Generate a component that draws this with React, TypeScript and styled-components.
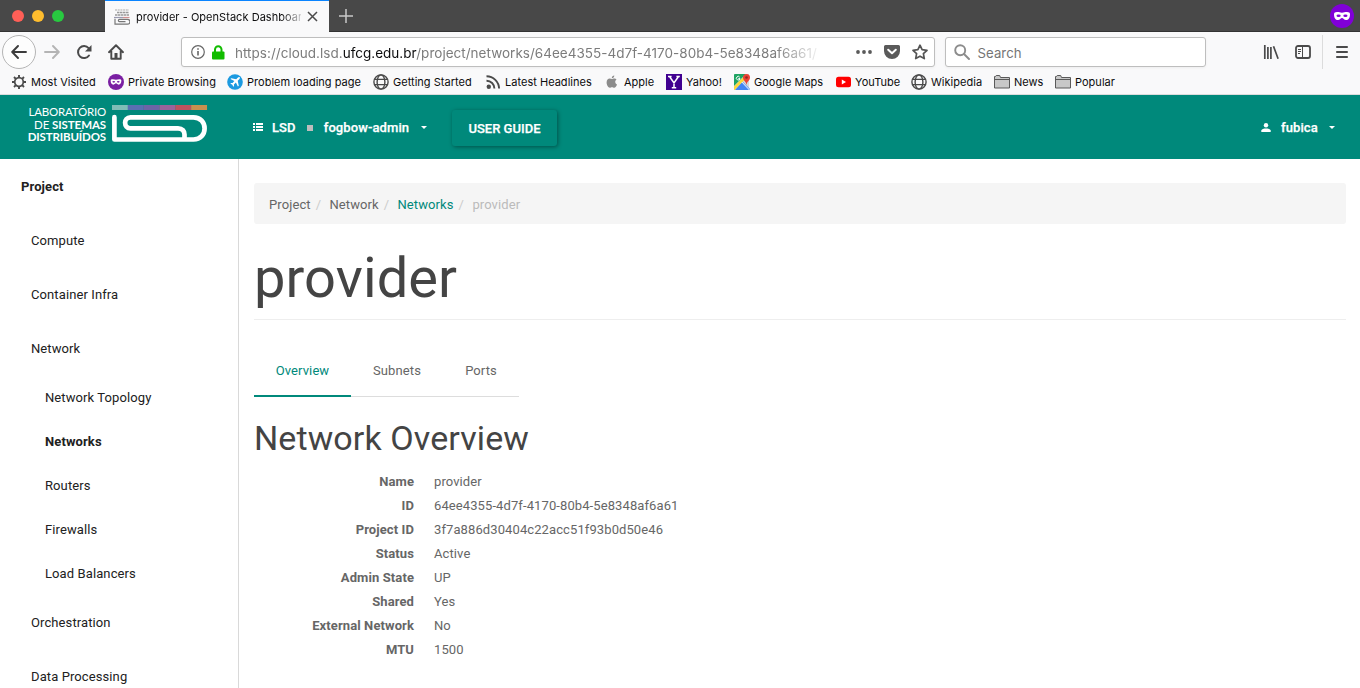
import React from 'react';
import styled, { createGlobalStyle, css } from 'styled-components';

const teal = '#00897b';
const chromeInk = '#4a4a4a';

const GlobalStyle = createGlobalStyle`
  * { box-sizing: border-box; }
  html, body { margin: 0; padding: 0; overflow: hidden; background: #fff; }
  body { font-family: Roboto, sans-serif; font-size: 13px; line-height: 24px; letter-spacing: 0.1px; color: #666; }
  svg { display: block; flex: none; }
`;

const Page = styled.div`
  width: 1360px;
  height: 688px;
  display: flex;
  flex-direction: column;
  overflow: hidden;
`;

/* ---------- browser window ---------- */

const TabStrip = styled.div`
  height: 32px;
  flex: none;
  display: flex;
  align-items: stretch;
  background: #484848;
  box-shadow: inset 0 -1px 0 #333;
  font-family: Inter, sans-serif;
`;

const TrafficLights = styled.div`
  width: 105px;
  display: flex;
  align-items: center;
  gap: 8px;
  padding-left: 12px;
`;

const Light = styled.span<{ $color: string }>`
  width: 12px;
  height: 12px;
  border-radius: 50%;
  background: ${(p) => p.$color};
`;

const BrowserTab = styled.div`
  width: 224px;
  display: flex;
  align-items: center;
  padding: 0 11px 0 9px;
  border-top: 1px solid #0a84ff;
  background: #f9f9fa;
`;

const TabTitle = styled.span`
  width: 165px;
  margin-left: 6px;
  margin-right: 6px;
  white-space: nowrap;
  font-size: 11px;
  letter-spacing: 0.04px;
  color: #0c0c0d;
  mask-image: linear-gradient(to right, #000 145px, transparent 170px);
`;

const NewTab = styled.div`
  display: flex;
  align-items: center;
  padding-left: 10px;
`;

const PrivateBadge = styled.div`
  display: flex;
  align-items: center;
  margin-left: auto;
  padding-right: 6px;
`;

const Toolbar = styled.div`
  height: 40px;
  flex: none;
  display: flex;
  align-items: center;
  background: #f9f9fa;
  font-family: Inter, sans-serif;
`;

const NavButtons = styled.div`
  width: 181px;
  display: flex;
  align-items: center;
  padding-left: 2px;
`;

const BackButton = styled.span`
  width: 34px;
  height: 34px;
  margin-right: 8px;
  display: flex;
  align-items: center;
  justify-content: center;
  border: 1px solid #b5b5b5;
  border-radius: 50%;
  background: #fdfdfd;
`;

const NavIcon = styled.span`
  width: 32px;
  display: flex;
`;

const fieldBox = css`
  height: 30px;
  display: flex;
  align-items: center;
  border: 1px solid #bebebe;
  border-radius: 3px;
  background: #fff;
  box-shadow: 0 1px 3px rgba(0, 0, 0, 0.05);
`;

const UrlBar = styled.div`
  ${fieldBox}
  width: 754px;
  padding: 0 6px 0 9px;
`;

const LockIcon = styled.svg`
  margin-left: 7px;
`;

const Url = styled.span`
  width: 590px;
  margin-left: 10px;
  margin-right: auto;
  padding-top: 2px;
  white-space: nowrap;
  font-size: 13.5px;
  letter-spacing: 0.02px;
  color: #7c7c7c;
  mask-image: linear-gradient(to right, #000 540px, transparent 588px);
`;

const UrlHost = styled.span`
  color: #0c0c0d;
`;

const UrlActions = styled.span`
  display: flex;
  align-items: center;
  gap: 12px;
`;

const SearchBox = styled.div`
  ${fieldBox}
  width: 261px;
  margin-left: 10px;
  padding-left: 8px;
  gap: 7.5px;
  font-size: 13.2px;
  letter-spacing: 0.05px;
  color: #757575;
`;

const SearchHint = styled.span`
  padding-top: 2px;
`;

const ToolIcons = styled.div`
  margin-left: auto;
  display: flex;
  align-items: center;
  gap: 16px;
`;

const MenuButton = styled.div`
  width: 38px;
  height: 34px;
  margin-left: -5px;
  padding-left: 13px;
  display: flex;
  align-items: center;
  border-left: 1px solid #dcdcdc;
`;

const Bookmarks = styled.div`
  height: 23px;
  flex: none;
  display: flex;
  padding: 0 0 2px 11px;
  background: #f9f9fa;
  border-bottom: 1px solid #dcdcdc;
  font-family: Inter, sans-serif;
  font-size: 11px;
  color: #0c0c0d;
`;

const Bookmark = styled.span<{ $width: number; $gap?: number }>`
  width: ${(p) => p.$width}px;
  display: flex;
  align-items: center;
  gap: ${(p) => p.$gap ?? 4}px;
  white-space: nowrap;
  letter-spacing: 0.02px;
`;

/* ---------- dashboard header ---------- */

const Header = styled.header`
  height: 64px;
  flex: none;
  display: flex;
  align-items: center;
  padding: 0 21px 0 28px;
  background: ${teal};
  color: #fff;
`;

const Logo = styled.div`
  width: 225px;
  height: 64px;
  display: flex;
  padding-top: 10px;
`;

const LogoText = styled.div`
  width: 78px;
  margin-right: 6px;
  padding-top: 1px;
  display: flex;
  flex-direction: column;
  align-items: flex-end;
  font-family: Lato, sans-serif;
  font-size: 11.5px;
  line-height: 12.5px;
  white-space: nowrap;
`;

const LogoLine = styled.div<{ $track?: number }>`
  letter-spacing: ${(p) => p.$track ?? 0}px;
`;

const HeaderText = styled.span<{ $before?: number }>`
  margin-left: ${(p) => p.$before ?? 0}px;
  padding-top: 1px;
  font-weight: 500;
  font-size: 13px;
  -webkit-text-stroke: 0.25px #fff;
`;

const Caret = styled.span<{ $before?: number }>`
  width: 0;
  height: 0;
  margin-left: ${(p) => p.$before ?? 11.5}px;
  border: 3px solid transparent;
  border-top-color: #fff;
  border-bottom: 0;
`;

const ProjectMenu = styled.div`
  width: 199px;
  display: flex;
  align-items: center;
`;

const Square = styled.span`
  width: 6px;
  height: 6px;
  margin: 2px 11px 0 11px;
  background: #bdbdbd;
`;

const GuideButton = styled.button`
  width: 105px;
  height: 36px;
  margin-top: 1px;
  padding: 1px 0 0;
  border: 0;
  border-radius: 3px;
  background: ${teal};
  box-shadow: 1px 1px 4px rgba(0, 0, 0, 0.4);
  color: #fff;
  font: 500 13px Roboto, sans-serif;
  letter-spacing: 0;
  -webkit-text-stroke: 0.25px #fff;
`;

const UserMenu = styled.div`
  margin-left: auto;
  width: 78px;
  display: flex;
  align-items: center;
`;

/* ---------- dashboard body ---------- */

const Body = styled.div`
  flex: 1;
  min-height: 0;
  display: flex;
`;

const Sidebar = styled.nav`
  width: 239px;
  flex: none;
  overflow: hidden;
  border-right: 1px solid #d9d9d9;
  color: #212121;
`;

const SideItem = styled.div<{ $level: number; $active?: boolean }>`
  height: ${(p) => (p.$level === 2 ? 44 : 54)}px;
  padding-top: 2px;
  padding-left: ${(p) => [21, 31, 45][p.$level]}px;
  display: flex;
  align-items: center;
  font-weight: ${(p) => (p.$active ? 700 : 400)};
`;

const Main = styled.main`
  flex: 1;
  padding: 24px 14px 0 15px;
`;

const Breadcrumb = styled.div`
  height: 41px;
  display: flex;
  align-items: center;
  padding: 2px 15px 0;
  border-radius: 3px;
  background: #f5f5f5;
`;

const Crumb = styled.span<{ $color?: string }>`
  color: ${(p) => p.$color ?? '#666'};
`;

const Slash = styled.span`
  padding: 0 8.3px 0 5px;
  color: #ccc;
`;

const Title = styled.h1`
  height: 96px;
  margin: 0;
  padding-top: 23px;
  border-bottom: 1px solid #eee;
  font-size: 56px;
  line-height: 62px;
  font-weight: 400;
  letter-spacing: 0.1px;
  color: #444;
`;

const Tabs = styled.div`
  width: max-content;
  height: 53px;
  margin-top: 24px;
  display: flex;
  box-shadow: inset 0 -1px 0 #ddd;
`;

const Tab = styled.div<{ $active?: boolean; $width: number }>`
  width: ${(p) => p.$width}px;
  display: flex;
  justify-content: center;
  padding-top: 15px;
  color: ${(p) => (p.$active ? teal : '#666')};
  box-shadow: ${(p) => (p.$active ? `inset 0 -2px 0 ${teal}` : 'none')};
`;

const SectionTitle = styled.h3`
  margin: 22px 0 13px;
  height: 38px;
  font-size: 34px;
  line-height: 38px;
  font-weight: 400;
  letter-spacing: 0.1px;
  color: #444;
`;

const Details = styled.dl`
  margin: 0;
  display: grid;
  grid-template-columns: 160px 1fr;
  column-gap: 20px;
  grid-auto-rows: 24px;
`;

const Term = styled.dt`
  text-align: right;
  font-weight: 700;
`;

const Value = styled.dd`
  margin: 0;
`;

/* ---------- icons ---------- */

const Mask = ({ size, color }: { size: number; color: string }) => (
  <svg width={size} height={size} viewBox="0 0 24 24">
    <circle cx="12" cy="12" r="12" fill={color} />
    <path
      d="M4 10.2C4 8.7 5.2 8 7 8c2 0 3.400.7 5 .7S15 8 17 8s3 .7 3 2.200c0 3.600-1.500 5.800-4 5.800-1.900 0-2.700-2-4-2s-2.100 2-4 2c-2.500 0-4-2.200-4-5.800z"
      fill="#fff"
    />
    <ellipse cx="8.600" cy="11.800" rx="2.100" ry="1.200" fill={color} />
    <ellipse cx="15.400" cy="11.800" rx="2.100" ry="1.200" fill={color} />
  </svg>
);

const Globe = () => (
  <svg width="16" height="16" viewBox="0 0 16 16" fill="none" stroke={chromeInk} strokeWidth="1.400">
    <circle cx="8" cy="8" r="7.100" />
    <ellipse cx="8" cy="8" rx="3.900" ry="7.100" />
    <path d="M1.500 5.300h13M1.500 10.700h13" strokeWidth="1.300" />
  </svg>
);

const Gear = () => (
  <svg width="16" height="16" viewBox="0 0 16 16" fill="none" stroke={chromeInk}>
    <circle cx="8" cy="8" r="4.300" strokeWidth="1.700" />
    <path
      d="M8 3.500V1M8 12.500V15M3.500 8H1M12.500 8H15M4.800 4.800L3 3M11.200 11.200L13 13M4.800 11.200L3 13M11.200 4.800L13 3"
      strokeWidth="1.900"
    />
  </svg>
);

const Plane = () => (
  <svg width="16" height="16" viewBox="0 0 16 16">
    <circle cx="8" cy="8" r="7.800" fill="#1c9ae0" />
    <path
      d="M12.700 3.300c-.6-.5-1.400-.1-2 .5L9.200 5.300 4.300 4.200l-.9.900L7.400 7.100 5.600 9.100l-1.600-.2-.7.700 2 1.100 1.100 2 .7-.7-.2-1.600 2-1.800 2 4 .9-.9-1.100-4.900 1.500-1.500c.6-.6 1-1.400.5-2z"
      fill="#fff"
    />
  </svg>
);

const Rss = () => (
  <svg width="15" height="16" viewBox="0 0 15 16" fill="none" stroke={chromeInk} strokeWidth="1.900">
    <circle cx="2.800" cy="12.700" r="2.200" fill={chromeInk} stroke="none" />
    <path d="M.5 6.700a7.800 7.800 0 0 1 7.900 7.900M.5 2.300a12.600 12.600 0 0 1 12.600 12.300" />
  </svg>
);

const Apple = () => (
  <svg width="14" height="16" viewBox="0 0 14 16" fill="#8b8b8b">
    <path d="M9.300 1.500c.1 1.500-1.100 2.700-2.500 2.700C6.700 2.800 7.900 1.600 9.300 1.500zM6.900 5c.6 0 1.300-.6 2.400-.6.900 0 1.800.5 2.300 1.200-2 1.200-1.700 4 .4 4.800-.5 1.500-1.700 3.300-2.800 3.300-.9 0-1.200-.5-2.200-.5s-1.400.5-2.200.5C3.200 13.700 1.600 10.900 1.600 8.500c0-2.500 1.500-4 3.100-4 1 0 1.700.5 2.200.5z" />
  </svg>
);

const Yahoo = () => (
  <svg width="16" height="16" viewBox="0 0 16 16">
    <path d="M0 0h16v16H0z" fill="#400090" />
    <path d="M3.500 2.500L8 9l4.500-6.500M8 8.500V14M2 2.500h3.600M10.400 2.500h3.400M5.800 13.700h4.400" fill="none" stroke="#fff" strokeWidth="1.500" />
  </svg>
);

const Maps = () => (
  <svg width="16" height="16" viewBox="0 0 16 16">
    <path d="M0 1a1 1 0 0 1 1-1h14v16H1a1 1 0 0 1-1-1z" fill="#d8d8d8" />
    <path d="M0 1a1 1 0 0 1 1-1h11L0 12z" fill="#1fa463" />
    <path d="M8.500 7.500L16 15v1H1z" fill="#4285f4" />
    <path d="M0 12.500L10 2.500l1.800 2L.5 16H0z" fill="#fdd835" />
    <path d="M7.800 8L15.500 16" stroke="#fff" strokeWidth="1" />
    <path d="M12.500 0A3.500 3.500 0 0 1 16 3.500C16 6.500 13 7 12.500 11 12 7 9 6.500 9 3.500A3.500 3.500 0 0 1 12.500 0z" fill="#ea4335" />
    <circle cx="12.500" cy="3.500" r="1.300" fill="#8f2a22" />
    <path d="M5.700 3.200A1.800 1.800 0 1 0 6 4.600H4.300" fill="none" stroke="#fff" />
  </svg>
);

const YouTube = () => (
  <svg width="15" height="16" viewBox="0 0 15 16">
    <rect x="0" y="2.700" width="15" height="10.600" rx="2.500" fill="#f00" />
    <path d="M5.800 5.600v4.800L10 8z" fill="#fff" />
  </svg>
);

const Folder = () => (
  <svg width="16" height="16" viewBox="0 0 16 16" fill="#c8c8c8" stroke="#5a5a5a">
    <path d="M.5 14V2.500h1l.7-1h3.500l.8 2h9V14z" />
    <path d="M.5 5.500h15" />
  </svg>
);

const Favicon = () => (
  <svg width="16" height="16" viewBox="0 0 16 16" fill="none">
    <path d="M1 1h14" stroke="#c4c4c4" strokeWidth="1.300" strokeDasharray="2 .7" />
    <path d="M3 3.500h12M1 6h14" stroke="#999" strokeWidth="1.600" strokeDasharray="2.500 .5" />
    <path d="M0 8.500h9" stroke="#9a9ab0" strokeWidth="1.200" />
    <path d="M9 8.500h6.500" stroke="#cf8f8f" strokeWidth="1.200" />
    <path d="M1 9.800v5.400h12.500a2.400 2.400 0 0 0 0-4.900H5.500c-1.500 0-1.500 2.300 0 2.300h6" stroke="#777" strokeWidth="1.200" />
  </svg>
);

const LogoMark = () => (
  <svg width="96" height="38" viewBox="0 0 96 38" fill="none">
    {['#80bdb7', '#5a6fb2', '#6d64a6', '#9b639b', '#bd525f', '#c8904f'].map((c, i) => (
      <rect key={c} x={i * 15.83} y="0" width="15.900" height="5" fill={c} />
    ))}
    <path
      d="M2.400 12.200V34.500H81.500C88.500 34.500 92.600 29.200 92.600 23.400S88.500 12.300 81.500 12.300H18.500C11.300 12.300 11.300 23.300 18.500 23.300H66C70.500 23.300 72.500 26 72.500 29.500V33"
      stroke="#fff"
      strokeWidth="4.700"
      strokeLinecap="round"
      strokeLinejoin="round"
    />
  </svg>
);

const bookmarks = [
  { label: 'Most Visited', width: 97, icon: <Gear /> },
  { label: 'Private Browsing', width: 119, icon: <Mask size={16} color="#7a1fa2" /> },
  { label: 'Problem loading page', width: 146, icon: <Plane /> },
  { label: 'Getting Started', width: 113, icon: <Globe /> },
  { label: 'Latest Headlines', width: 119, icon: <Rss /> },
  { label: 'Apple', width: 61, gap: 5, icon: <Apple /> },
  { label: 'Yahoo!', width: 68, icon: <Yahoo /> },
  { label: 'Google Maps', width: 102, icon: <Maps /> },
  { label: 'YouTube', width: 75, icon: <YouTube /> },
  { label: 'Wikipedia', width: 83, icon: <Globe /> },
  { label: 'News', width: 61, icon: <Folder /> },
  { label: 'Popular', width: 80, icon: <Folder /> },
];

const sideItems = [
  { label: 'Project', level: 0, active: true },
  { label: 'Compute', level: 1 },
  { label: 'Container Infra', level: 1 },
  { label: 'Network', level: 1 },
  { label: 'Network Topology', level: 2 },
  { label: 'Networks', level: 2, active: true },
  { label: 'Routers', level: 2 },
  { label: 'Firewalls', level: 2 },
  { label: 'Load Balancers', level: 2 },
  { label: 'Orchestration', level: 1 },
  { label: 'Data Processing', level: 1 },
];

const crumbs = [
  { label: 'Project' },
  { label: 'Network' },
  { label: 'Networks', color: teal },
  { label: 'provider', color: '#bbb' },
];

const details = [
  ['Name', 'provider'],
  ['ID', '64ee4355-4d7f-4170-80b4-5e8348af6a61'],
  ['Project ID', '3f7a886d30404c22acc51f93b0d50e46'],
  ['Status', 'Active'],
  ['Admin State', 'UP'],
  ['Shared', 'Yes'],
  ['External Network', 'No'],
  ['MTU', '1500'],
];

const BrowserChrome = () => (
  <>
    <TabStrip>
      <TrafficLights>
        <Light $color="#ff5f57" />
        <Light $color="#ffbd2e" />
        <Light $color="#28c940" />
      </TrafficLights>
      <BrowserTab>
        <Favicon />
        <TabTitle>provider - OpenStack Dashboar</TabTitle>
        <svg width="11" height="11" viewBox="0 0 11 11" stroke="#4a4a4a" strokeWidth="1.500">
          <path d="M1 1l9 9M10 1l-9 9" />
        </svg>
      </BrowserTab>
      <NewTab>
        <svg width="14" height="14" viewBox="0 0 14 14" stroke="#c8c8c8" strokeWidth="1.500">
          <path d="M7 0v14M0 7h14" />
        </svg>
      </NewTab>
      <PrivateBadge>
        <Mask size={24} color="#8000d7" />
      </PrivateBadge>
    </TabStrip>

    <Toolbar>
      <NavButtons>
        <BackButton>
          <svg width="16" height="16" viewBox="0 0 16 16" fill="none" stroke="#3c3c3c" strokeWidth="1.900" strokeLinecap="round" strokeLinejoin="round">
            <path d="M15 8H1.500M7 2L1.200 8 7 14" />
          </svg>
        </BackButton>
        <NavIcon>
          <svg width="16" height="16" viewBox="0 0 16 16" fill="none" stroke="#b4b4b4" strokeWidth="1.900" strokeLinecap="round" strokeLinejoin="round">
            <path d="M1 8h13.500M9 2l5.800 6L9 14" />
          </svg>
        </NavIcon>
        <NavIcon>
          <svg width="16" height="16" viewBox="0 0 16 16" fill="none" stroke={chromeInk} strokeWidth="2">
            <path d="M13 11.500A6 6 0 1 1 12.600 4.200" strokeLinecap="round" />
            <path d="M15.500 1v6.500H9z" fill={chromeInk} stroke="none" />
          </svg>
        </NavIcon>
        <NavIcon>
          <svg width="16" height="16" viewBox="0 0 16 16" fill="none" stroke={chromeInk} strokeWidth="1.900" strokeLinejoin="round" strokeLinecap="round">
            <path d="M1 8.200L8 1.300l7 6.900M3.300 7v7.800h9.400V7" />
            <path d="M6.500 14.500V9h3v5.500z" fill={chromeInk} stroke="none" />
          </svg>
        </NavIcon>
      </NavButtons>
      <UrlBar>
        <svg width="14" height="14" viewBox="0 0 14 14" fill="none" stroke="#666">
          <circle cx="7" cy="7" r="6.300" strokeWidth="1.200" />
          <path d="M7 6v4.500M7 3.200v1.600" strokeWidth="1.600" />
        </svg>
        <LockIcon width="13" height="15" viewBox="0 0 13 15">
          <rect x="0" y="6.500" width="12.500" height="8" rx="1" fill="#12bc00" />
          <path d="M3 7V4.500a3.250 3.250 0 0 1 6.500 0V7" fill="none" stroke="#12bc00" strokeWidth="2" />
        </LockIcon>
        <Url>
          https://cloud.lsd.<UrlHost>ufcg.edu.br</UrlHost>/project/networks/64ee4355-4d7f-4170-80b4-5e8348af6a61/
        </Url>
        <UrlActions>
          <svg width="16" height="16" viewBox="0 0 16 16" fill="#5a5a5a">
            <circle cx="2" cy="8" r="1.900" />
            <circle cx="8" cy="8" r="1.900" />
            <circle cx="14" cy="8" r="1.900" />
          </svg>
          <svg width="16" height="16" viewBox="0 0 16 16">
            <path d="M1.500 1h13A1.500 1.500 0 0 1 16 2.500V7A8 8 0 0 1 0 7V2.500A1.500 1.500 0 0 1 1.500 1z" fill="#5a5a5a" />
            <path d="M4.200 5.800L8 9.300l3.800-3.500" fill="none" stroke="#fff" strokeWidth="2" strokeLinecap="round" strokeLinejoin="round" />
          </svg>
          <svg width="16" height="16" viewBox="0 0 16 16" fill="none" stroke="#555" strokeWidth="1.700" strokeLinejoin="round">
            <path d="M8 1.200l2.100 4.500 4.900.6-3.600 3.400.9 4.900L8 12.200l-4.300 2.400.9-4.900L1 6.300l4.900-.6z" />
          </svg>
        </UrlActions>
      </UrlBar>
      <SearchBox>
        <svg width="16" height="16" viewBox="0 0 16 16" fill="none" stroke="#8c8c8c" strokeWidth="1.900" strokeLinecap="round">
          <circle cx="6.200" cy="6.200" r="5" />
          <path d="M10 10l5 5" />
        </svg>
        <SearchHint>Search</SearchHint>
      </SearchBox>
      <ToolIcons>
        <svg width="16" height="16" viewBox="0 0 16 16" fill="none" stroke={chromeInk} strokeWidth="1.700">
          <path d="M1.800 1v14M4.900 3v12M7.900 3v12M10.500 2.300l4.600 12.400" />
        </svg>
        <svg width="16" height="16" viewBox="0 0 16 16" fill="none" stroke={chromeInk}>
          <rect x="1" y="2" width="14" height="12" rx="2" strokeWidth="1.800" />
          <path d="M7.500 2v12M3 5.500h3M3 7.500h3M3 9.500h2" strokeWidth="1" />
        </svg>
        <MenuButton>
          <svg width="12" height="12" viewBox="0 0 12 12" stroke={chromeInk} strokeWidth="1.800" strokeLinecap="round">
            <path d="M.9 1h10.200M.9 6h10.200M.9 11h10.200" />
          </svg>
        </MenuButton>
      </ToolIcons>
    </Toolbar>

    <Bookmarks>
      {bookmarks.map((b) => (
        <Bookmark key={b.label} $width={b.width} $gap={b.gap}>
          {b.icon}
          <span>{b.label}</span>
        </Bookmark>
      ))}
    </Bookmarks>
  </>
);

export default function App() {
  return (
    <Page>
      <GlobalStyle />
      <BrowserChrome />

      <Header>
        <Logo>
          <LogoText>
            <LogoLine $track={-0.2}>LABORATÓRIO</LogoLine>
            <LogoLine $track={-0.1}>
              DE <b>SISTEMAS</b>
            </LogoLine>
            <LogoLine $track={-0.15}>
              <b>DISTRIBUÍDOS</b>
            </LogoLine>
          </LogoText>
          <LogoMark />
        </Logo>
        <ProjectMenu>
          <svg width="10" height="8" viewBox="0 0 10 8" fill="#fff">
            <path d="M0 0h2v2H0zM3 0h7v2H3zM0 3h2v2H0zM3 3h7v2H3zM0 6h2v2H0zM3 6h7v2H3z" />
          </svg>
          <HeaderText $before={9}>LSD</HeaderText>
          <Square />
          <HeaderText>fogbow-admin</HeaderText>
          <Caret />
        </ProjectMenu>
        <GuideButton>USER GUIDE</GuideButton>
        <UserMenu>
          <svg width="10" height="9" viewBox="0 0 10 9" fill="#fff">
            <circle cx="5" cy="2.200" r="2.200" />
            <path d="M.3 9V7.600C.3 6 3 5.400 5 5.400s4.700.6 4.700 2.200V9z" />
          </svg>
          <HeaderText $before={10}>fubica</HeaderText>
          <Caret $before={11} />
        </UserMenu>
      </Header>

      <Body>
        <Sidebar>
          {sideItems.map((s) => (
            <SideItem key={s.label} $level={s.level} $active={s.active}>
              {s.label}
            </SideItem>
          ))}
        </Sidebar>
        <Main>
          <Breadcrumb>
            {crumbs.map((c, i) => (
              <React.Fragment key={c.label}>
                {i > 0 && <Slash>/</Slash>}
                <Crumb $color={c.color}>{c.label}</Crumb>
              </React.Fragment>
            ))}
          </Breadcrumb>
          <Title>provider</Title>
          <Tabs>
            <Tab $active $width={97}>Overview</Tab>
            <Tab $width={92}>Subnets</Tab>
            <Tab $width={76}>Ports</Tab>
          </Tabs>
          <SectionTitle>Network Overview</SectionTitle>
          <Details>
            {details.map(([term, value]) => (
              <React.Fragment key={term}>
                <Term>{term}</Term>
                <Value>{value}</Value>
              </React.Fragment>
            ))}
          </Details>
        </Main>
      </Body>
    </Page>
  );
}
